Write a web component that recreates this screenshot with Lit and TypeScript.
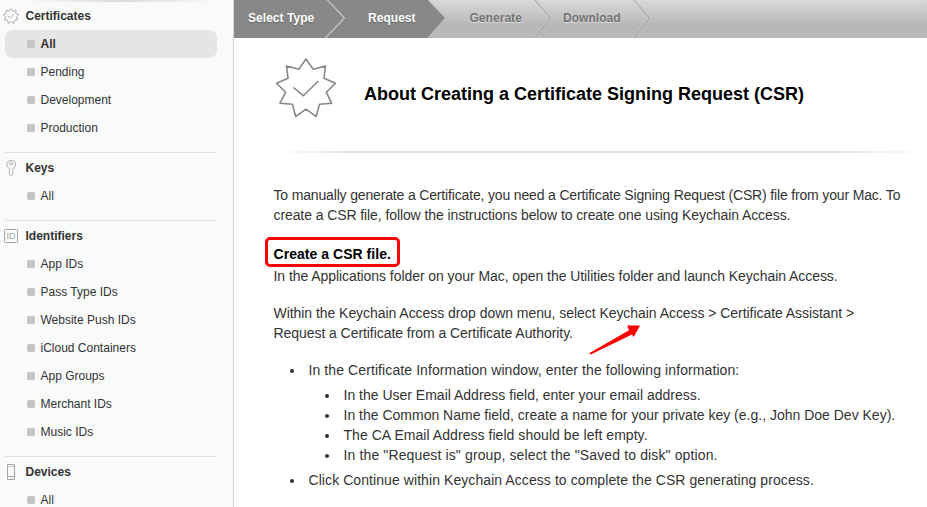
import { LitElement, html, css, svg } from "lit";
import { customElement, property } from "lit/decorators.js";

const seal = (w: number) => svg`
  <path fill="none" stroke="currentColor" stroke-width=${w} stroke-linejoin="round"
    d="M31 2 L38.2 12.2 L50.5 9 L49 21.3 L60.5 26.3 L51.3 35.2 L56.6 46.2 L44.6 47.3 L41.2 59.5 L31 52.2 L20.7 59.5 L17.4 47.3 L5 46.2 L10.7 35.2 L1.5 26.3 L13 21.3 L11.5 9 L23.8 12.2 Z"/>
  <path fill="none" stroke="currentColor" stroke-width=${w} d="M18.5 30.5 L28.3 38.7 L43.3 24"/>`;

const icons: Record<string, unknown> = {
  seal: html`<svg width="16" height="16" viewBox="0 0 62 62">${seal(3.4)}</svg>`,
  key: html`<svg width="16" height="16" viewBox="0 0 16 16" fill="none" stroke="currentColor" stroke-width=".9">
    <path d="M6.4 8.5 Q3.8 7.2 3.8 4.6 Q4 .5 8.2 .5 Q12.4 .5 12.6 4.6 Q12.6 7.2 10 8.5 V10 L9.3 10.6 L10.4 11.6 L9.6 12.6 L10.2 13.8 L8.3 15.6 L6.4 14.2 Z"/>
    <ellipse cx="8.2" cy="3.7" rx="1.8" ry="1.1"/></svg>`,
  id: html`<svg width="16" height="16" viewBox="0 0 16 16"><rect x="1.5" y="1.5" width="13" height="13" rx=".8" fill="none" stroke="currentColor"/>
    <text x="8.1" y="11.2" text-anchor="middle" font-family="Liberation Sans, sans-serif" font-weight="normal" font-size="9" fill="currentColor">ID</text></svg>`,
  device: html`<svg width="16" height="16" viewBox="0 0 16 16" fill="none" stroke="currentColor">
    <rect x="4.5" y=".5" width="7" height="15" rx=".3"/><path d="M5 2.5 H11" stroke-opacity=".6"/><path d="M5 12.5 H11"/><path d="M7.2 14.1 H8.8" stroke-opacity=".6"/></svg>`,
};

const sections = [
  { name: "Certificates", icon: "seal", items: ["All", "Pending", "Development", "Production"], active: 0 },
  { name: "Keys", icon: "key", items: ["All"], active: -1 },
  { name: "Identifiers", icon: "id", items: ["App IDs", "Pass Type IDs", "Website Push IDs", "iCloud Containers", "App Groups", "Merchant IDs", "Music IDs"], active: -1 },
  { name: "Devices", icon: "device", items: ["All"], active: -1 },
];

@customElement("side-nav")
export class SideNav extends LitElement {
  static styles = css`
    :host { display: block; width: 233px; flex: none; background: #f9fbfa; border-right: 1px solid #cfd3d2; overflow: hidden; }
    .section { margin: 0 16px 0 5px; padding: 1px 0 10px; border-top: 1px solid #e2e4e3; color: #333; }
    .section:first-child { padding-top: 0; border-top-width: 2px; border-image: linear-gradient(90deg, #f9fbfa 10%, #dadcdb 55%, #f9fbfa) 2; }
    .head { display: flex; align-items: center; height: 28px; font-weight: bold; gap: 6.5px; margin-left: -2px; }
    .head svg { color: #a3a5a4; flex: none; }
    .item { display: flex; align-items: center; height: 28px; padding-left: 22px; gap: 5.5px; border-radius: 8px; }
    .item.active { background: #e5e5e5; font-weight: bold; }
    .dot { width: 8px; height: 8px; border-radius: 1.5px; background: #c6c6c6; }
  `;
  render() {
    return sections.map((s) => html`<div class="section">
      <div class="head">${icons[s.icon]}<span>${s.name}</span></div>
      ${s.items.map((t, i) => html`<div class="item ${i === s.active ? "active" : ""}"><span class="dot"></span><span>${t}</span></div>`)}
    </div>`);
  }
}

@customElement("step-bar")
export class StepBar extends LitElement {
  @property({ type: Number }) current = 1;
  static styles = css`
    :host { display: block; position: relative; height: 38px; background: linear-gradient(#d9d9d9, #b8b8b8 65%, #b8b8b8); }
    .shape { position: absolute; left: 0; top: 0; }
    .labels { position: relative; display: grid; grid-template-columns: 120px 101.5px 93.5px 100px; padding-left: 14px; height: 35px; align-items: center; font-weight: bold; font-size: 12px; letter-spacing: .04px; color: #737373; text-shadow: 0 1px 1px #dedede; }
    .done { color: #fff; text-shadow: 0 1px 1px #666; }
  `;
  render() {
    return html`<svg class="shape" width="693" height="38" fill="none">
        <path d="M0 0 H194 L211 18 L193 38 H0 Z" fill="#888"/>
        <path d="M92.5 -1 L110.5 18 L91 38.5" stroke="#c4c4c4" stroke-width="1.3"/>
        ${[301, 400].map((x) => svg`<path d="M${x} 0 L${x + 15} 18 L${x} 37" stroke="#999"/><path d="M${x - 1} 0 L${x + 14} 18 L${x - 1} 37" stroke="#d4d4d4" stroke-width=".7"/>`)}
      </svg>
      <div class="labels">${["Select Type", "Request", "Generate", "Download"].map((t, i) => html`<span class=${i <= this.current ? "done" : ""}>${t}</span>`)}</div>`;
  }
}

@customElement("app-root")
export class AppRoot extends LitElement {
  static styles = css`
    :host { display: flex; height: 507px; overflow: hidden; background: #fff; font: 12px "Liberation Sans", Arial, sans-serif; color: #333; }
    main { flex: 1; min-width: 0; }
    .title { display: flex; height: 113px; padding-left: 41px; align-items: flex-start; }
    .title svg { color: #888; margin-top: 19px; flex: none; }
    h1 { margin: 43px 0 0 27px; font-size: 18px; line-height: 26px; color: #000; white-space: nowrap; }
    .rule { height: 2px; margin-left: 40px; background: linear-gradient(90deg, #fff, #e2e2e2 12%, #e2e2e2 86%, #fff); }
    .body { padding: 32px 0 0 39.5px; font-size: 14px; line-height: 20px; white-space: nowrap; }
    p { margin: 0; }
    h2 { position: relative; margin: 18px 0 1px; font-size: 14px; line-height: 22px; letter-spacing: .04px; color: #000; width: 118px; }
    .mark { position: absolute; left: -8.5px; top: -6px; width: 129px; height: 24px; border: 3px solid #f00; border-radius: 5px; }
    .menu { position: relative; margin: 17px 0; }
    .arrow { position: absolute; left: 315.5px; top: 19px; }
    ul { margin: 0; padding: 0 0 0 35px; list-style: none; }
    li { position: relative; }
    li::before { content: ""; position: absolute; left: -19px; top: 9px; width: 4px; height: 4px; border-radius: 50%; background: #333; }
    ul ul { margin: 5px 0; }
    .t1 { letter-spacing: -.16px; }
    .t2 { letter-spacing: -.09px; }
    .t3 { letter-spacing: -.06px; }
    .t4 { letter-spacing: -.05px; }
    .w1 { letter-spacing: .05px; }
    .w2 { letter-spacing: .075px; }
    .w3 { letter-spacing: .095px; }
    .w4 { letter-spacing: .13px; }
  `;
  render() {
    return html`<side-nav></side-nav>
      <main>
        <step-bar></step-bar>
        <div class="title">
          <svg width="62" height="62" viewBox="0 0 62 62">${seal(1.6)}</svg>
          <h1>About Creating a Certificate Signing Request (CSR)</h1>
        </div>
        <div class="rule"></div>
        <div class="body">
          <p><span class="t1">To manually generate a Certificate, you need a Certificate Signing Request (CSR) file from your Mac. To</span><br><span class="t2">create a CSR file, follow the instructions below to create one using Keychain Access.</span></p>
          <h2>Create a CSR file.<span class="mark"></span></h2>
          <p class="t3">In the Applications folder on your Mac, open the Utilities folder and launch Keychain Access.</p>
          <p class="menu"><span class="t4">Within the Keychain Access drop down menu, select Keychain Access &gt; Certificate Assistant &gt;</span><br><span class="t3">Request a Certificate from a Certificate Authority.</span>
            <svg class="arrow" width="54" height="34"><path fill="#f00" d="M.6 31 L40 8.3 L38.2 3.6 L51 3.6 L44.6 15 L43 12.6 L1.8 32.6 Q.4 32.6 .6 31 Z"/></svg>
          </p>
          <ul>
            <li><span class="w3">In the Certificate Information window, enter the following information:</span>
              <ul>
                <li>In the User Email Address field, enter your email address.</li>
                <li>In the Common Name field, create a name for your private key (e.g., John Doe Dev Key).</li>
                <li class="w1">The CA Email Address field should be left empty.</li>
                <li class="w4">In the "Request is" group, select the "Saved to disk" option.</li>
              </ul>
            </li>
            <li class="w2">Click Continue within Keychain Access to complete the CSR generating process.</li>
          </ul>
        </div>
      </main>`;
  }
}
